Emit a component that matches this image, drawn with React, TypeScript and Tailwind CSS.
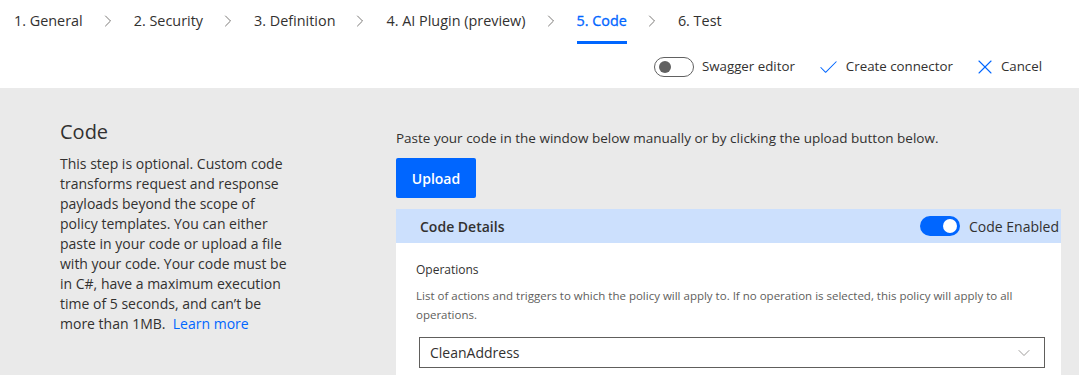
import React from "react";
import { ChevronRight, ChevronDown, Check, X } from "lucide-react";

const steps = [
  "1. General",
  "2. Security",
  "3. Definition",
  "4. AI Plugin (preview)",
  "5. Code",
  "6. Test",
];

function Toggle({ on }: { on: boolean }) {
  if (on) {
    return (
      <span className="flex h-5 w-10 items-center justify-end rounded-full bg-[#0066ff] pr-[3px]">
        <span className="h-[14px] w-[14px] rounded-full bg-white" />
      </span>
    );
  }
  return (
    <span className="flex h-5 w-10 items-center rounded-full border border-[#616161] bg-white pl-[4px]">
      <span className="h-3 w-3 rounded-full bg-[#616161]" />
    </span>
  );
}

export default function App() {
  return (
    <div className="flex h-[375px] w-[1079px] flex-col overflow-hidden bg-[#eaeaea] font-['Open_Sans',sans-serif] text-[#323130]">
      {/* header */}
      <div className="h-[88px] shrink-0 bg-white">
        <nav className="flex h-[44px] items-start pl-[14px] pt-[10px] text-[14.4px]">
          {steps.map((s, i) => (
            <React.Fragment key={s}>
              {i > 0 && (
                <ChevronRight className="ml-[15px] mr-[16px] mt-[1px] h-5 w-5 text-[#605e5c]" strokeWidth={1} />
              )}
              <div
                className={
                  s === "5. Code"
                    ? "flex h-[34px] flex-col border-b-[3px] border-[#0066ff] text-[#0066ff] [-webkit-text-stroke:0.3px_#0066ff]"
                    : "flex h-[34px] flex-col"
                }
              >
                {s}
              </div>
            </React.Fragment>
          ))}
        </nav>
        <div className="flex items-center justify-end pr-[37px] pt-[11px] text-[13.3px]">
          <div className="flex items-center gap-2">
            <Toggle on={false} />
            <span>Swagger editor</span>
          </div>
          <div className="ml-[22px] flex items-center gap-[6px]">
            <Check className="h-[23px] w-[23px] text-[#0066ff]" strokeWidth={1.1} />
            <span>Create connector</span>
          </div>
          <div className="ml-[20px] flex items-center gap-[4px]">
            <X className="h-6 w-6 text-[#0066ff]" strokeWidth={1.1} />
            <span>Cancel</span>
          </div>
        </div>
      </div>

      {/* body */}
      <div className="flex min-h-0 flex-1 overflow-hidden pt-[30px]">
        <aside className="w-[396px] shrink-0 pl-[60px]">
          <h1 className="text-[20px] leading-[28px]">Code</h1>
          <p className="mt-[8px] w-[234px] text-[14px] leading-[20px]">
            This step is optional. Custom code transforms request and response payloads beyond the scope of policy
            templates. You can either paste in your code or upload a file with your code. Your code must be in C#, have
            a maximum execution time of 5 seconds, and can’t be more than 1MB.{"\u00a0 "}
            <span className="text-[#0066ff]">Learn more</span>
          </p>
        </aside>

        <main className="flex-1 pr-[18px] pt-[10px]">
          <p className="text-[13.5px] leading-[20px]">
            Paste your code in the window below manually or by clicking the upload button below.
          </p>
          <button className="mt-[10px] h-10 w-20 rounded-[2px] bg-[#0066ff] text-[14px] font-semibold text-white">
            Upload
          </button>
          <section className="mt-[11px]">
            <div className="flex h-[34px] items-center justify-between bg-[#cce0fd] pl-6 pr-[2px]">
              <span className="text-[14px] font-semibold">Code Details</span>
              <div className="flex items-center gap-[9px]">
                <Toggle on />
                <span className="text-[14px]">Code Enabled</span>
              </div>
            </div>
            <div className="bg-white pb-4 pl-5 pr-4 pt-[18px]">
              <div className="text-[12px] leading-[18px]">Operations</div>
              <p className="mt-[7px] text-[11.5px] leading-[19px] text-[#605e5c]">
                List of actions and triggers to which the policy will apply to. If no operation is selected, this policy
                will apply to all operations.
              </p>
              <div className="ml-[3px] mt-[13px] flex h-[31px] items-center justify-between border border-[#605e5c] pl-[10px] pr-[10px]">
                <span className="text-[14px]">CleanAddress</span>
                <ChevronDown className="h-5 w-5 text-[#8a8886]" strokeWidth={1} />
              </div>
            </div>
          </section>
        </main>
      </div>
    </div>
  );
}
